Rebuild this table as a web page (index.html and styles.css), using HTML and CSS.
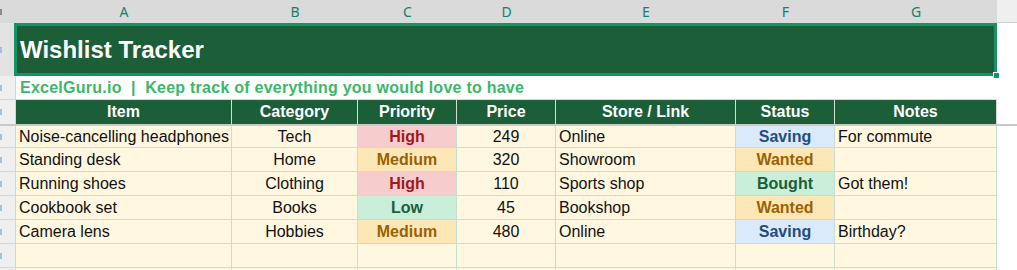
FILE: index.html
```html
<!DOCTYPE html>
<html>
<head>
<meta charset="utf-8">
<link rel="stylesheet" href="styles.css">
</head>
<body>
<div class="sheet">
  <div class="row colhead">
    <div class="corner"></div>
    <div class="col">A</div><div class="col">B</div><div class="col">C</div><div class="col">D</div><div class="col">E</div><div class="col">F</div><div class="col">G</div>
    <div class="fill"></div>
  </div>
  <div class="row title-row">
    <div class="rh sel"></div>
    <div class="title">Wishlist Tracker<span class="handle"></span></div>
    <div class="fill"></div>
  </div>
  <div class="row sub-row">
    <div class="rh"></div>
    <div class="sub">ExcelGuru.io&nbsp; |&nbsp; Keep track of everything you would love to have</div>
    <div class="fill"></div>
  </div>
  <div class="row head-row">
    <div class="rh"></div>
    <div class="h">Item</div><div class="h">Category</div><div class="h">Priority</div><div class="h">Price</div><div class="h">Store / Link</div><div class="h">Status</div><div class="h">Notes</div>
    <div class="fill"></div>
  </div>
  <div class="freeze"></div>
  <div class="row data first">
    <div class="rh"></div>
    <div class="c l">Noise-cancelling headphones</div><div class="c">Tech</div><div class="c b high">High</div><div class="c">249</div><div class="c l">Online</div><div class="c b saving">Saving</div><div class="c l">For commute</div>
    <div class="fill"></div>
  </div>
  <div class="row data">
    <div class="rh"></div>
    <div class="c l">Standing desk</div><div class="c">Home</div><div class="c b medium">Medium</div><div class="c">320</div><div class="c l">Showroom</div><div class="c b medium">Wanted</div><div class="c l"></div>
    <div class="fill"></div>
  </div>
  <div class="row data">
    <div class="rh"></div>
    <div class="c l">Running shoes</div><div class="c">Clothing</div><div class="c b high">High</div><div class="c">110</div><div class="c l">Sports shop</div><div class="c b bought">Bought</div><div class="c l">Got them!</div>
    <div class="fill"></div>
  </div>
  <div class="row data">
    <div class="rh"></div>
    <div class="c l">Cookbook set</div><div class="c">Books</div><div class="c b low">Low</div><div class="c">45</div><div class="c l">Bookshop</div><div class="c b medium">Wanted</div><div class="c l"></div>
    <div class="fill"></div>
  </div>
  <div class="row data">
    <div class="rh"></div>
    <div class="c l">Camera lens</div><div class="c">Hobbies</div><div class="c b medium">Medium</div><div class="c">480</div><div class="c l">Online</div><div class="c b saving">Saving</div><div class="c l">Birthday?</div>
    <div class="fill"></div>
  </div>
  <div class="row data">
    <div class="rh"></div>
    <div class="c"></div><div class="c"></div><div class="c"></div><div class="c"></div><div class="c"></div><div class="c"></div><div class="c"></div>
    <div class="fill"></div>
  </div>
  <div class="row data">
    <div class="rh"></div>
    <div class="c"></div><div class="c"></div><div class="c"></div><div class="c"></div><div class="c"></div><div class="c"></div><div class="c"></div>
    <div class="fill"></div>
  </div>
</div>
</body>
</html>
```

FILE: styles.css
```css
html, body {
  margin: 0;
  padding: 0;
  background: #ffffff;
  overflow: hidden;
}
.sheet {
  width: 1017px;
  height: 270px;
  overflow: hidden;
  font-family: "Liberation Sans", Arial, sans-serif;
}
.row {
  display: grid;
  grid-template-columns: 16px 216px 126px 99px 99px 180px 99px 162px 1fr;
}
.colhead {
  height: 23px;
  background: #dadada;
}
.colhead .corner {
  background: #dadada;
  position: relative;
}
.colhead .corner::before {
  content: "";
  position: absolute;
  left: 0;
  top: 9px;
  width: 2px;
  height: 6px;
  background: #8a8a8a;
}
.colhead .col {
  font-family: "Noto Sans", "Open Sans", sans-serif;
  font-size: 14px;
  line-height: 23px;
  color: #13806a;
  text-align: center;
}
.colhead .fill {
  background: #efefef;
  border-bottom: 1px solid #d0d0d0;
  height: 23px;
  box-sizing: border-box;
}
.rh {
  background: #efefef;
  border-right: 1px solid #d6d6d6;
  position: relative;
  box-sizing: border-box;
}
.rh::before {
  content: "";
  position: absolute;
  left: 0;
  top: 50%;
  margin-top: -3px;
  width: 2px;
  height: 6px;
  background: #9cc2e6;
}
.rh.sel {
  background: #e3e3e3;
}
.title-row {
  height: 53px;
}
.title {
  grid-column: 2 / 9;
  margin-left: -2px;
  position: relative;
  background: #1b5e38;
  border: 3px solid #179265;
  color: #ffffff;
  font-weight: bold;
  font-size: 24px;
  line-height: 47px;
  padding-left: 3px;
  box-sizing: border-box;
}
.handle {
  position: absolute;
  right: -5px;
  bottom: -5px;
  width: 5px;
  height: 5px;
  background: #179265;
  border-left: 1px solid #ffffff;
  border-top: 1px solid #ffffff;
}
.sub-row {
  height: 24px;
}
.sub {
  grid-column: 2 / 9;
  background: #ffffff;
  border-bottom: 1px solid #d3dcd7;
  color: #3cb76a;
  font-weight: bold;
  font-size: 16px;
  letter-spacing: 0.25px;
  line-height: 23px;
  padding-left: 4px;
  white-space: pre;
}
.sub-row .rh {
  border-bottom: 1px solid #d6d6d6;
}
.head-row {
  height: 24px;
}
.h {
  background: #1b5e38;
  color: #ffffff;
  font-weight: bold;
  font-size: 16px;
  line-height: 24px;
  text-align: center;
  border-right: 1px solid #cfe0d5;
}
.freeze {
  height: 2px;
  background: #c9c9c9;
}
.data {
  height: 24px;
}
.data.first {
  height: 22px;
}
.c {
  background: #fff7e0;
  border-right: 1px solid #c9ddd0;
  border-bottom: 1px solid #c9ddd0;
  font-size: 16px;
  line-height: 23px;
  color: #111111;
  text-align: center;
  white-space: nowrap;
  overflow: hidden;
  padding: 0 3px;
}
.data.first .c {
  line-height: 21px;
}
.c.l {
  text-align: left;
}
.data .rh {
  border-bottom: 1px solid #d6d6d6;
}
.b {
  font-weight: bold;
}
.high {
  background: #f7cccc;
  color: #a1191f;
}
.medium {
  background: #fde7b6;
  color: #9a6200;
}
.low {
  background: #c9eed9;
  color: #1b5e38;
}
.bought {
  background: #c9eed9;
  color: #1b5e38;
}
.saving {
  background: #dbeafa;
  color: #1f4e82;
}
.fill {
  background: #ffffff;
}
```
